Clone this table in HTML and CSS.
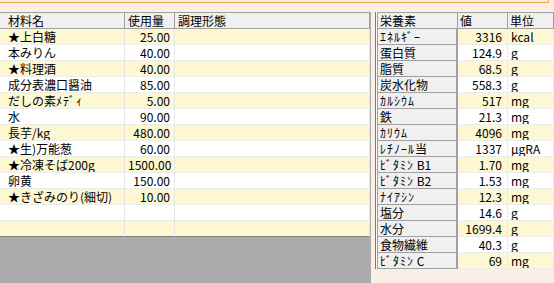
FILE: index.html
```html
<!DOCTYPE html>
<html lang="ja">
<head>
<meta charset="utf-8">
<link rel="stylesheet" href="styles.css">
</head>
<body>
<div class="topbar"></div>
<div class="main">
  <div class="left">
    <div class="grid ingredients">
      <div class="hc"></div><div class="hc">材料名</div><div class="hc">使用量</div><div class="hc">調理形態</div>
      <div class="c y"></div><div class="c y">★上白糖</div><div class="c y num">25.00</div><div class="c y"></div>
      <div class="c"></div><div class="c">本みりん</div><div class="c num">40.00</div><div class="c"></div>
      <div class="c y"></div><div class="c y">★料理酒</div><div class="c y num">40.00</div><div class="c y"></div>
      <div class="c"></div><div class="c">成分表濃口醤油</div><div class="c num">85.00</div><div class="c"></div>
      <div class="c y"></div><div class="c y">だしの素<span class="hk">ﾒﾃﾞｨ</span></div><div class="c y num">5.00</div><div class="c y"></div>
      <div class="c"></div><div class="c">水</div><div class="c num">90.00</div><div class="c"></div>
      <div class="c y"></div><div class="c y">長芋/kg</div><div class="c y num">480.00</div><div class="c y"></div>
      <div class="c"></div><div class="c">★生)万能葱</div><div class="c num">60.00</div><div class="c"></div>
      <div class="c y"></div><div class="c y">★冷凍そば200g</div><div class="c y num">1500.00</div><div class="c y"></div>
      <div class="c"></div><div class="c">卵黄</div><div class="c num">150.00</div><div class="c"></div>
      <div class="c y"></div><div class="c y">★きざみのり(細切)</div><div class="c y num">10.00</div><div class="c y"></div>
      <div class="c"></div><div class="c"></div><div class="c"></div><div class="c"></div>
      <div class="c y last"></div><div class="c y last"></div><div class="c y last"></div><div class="c y last"></div>
    </div>
  </div>
  <div class="right">
    <div class="grid nutrients">
      <div class="hc">栄養素</div><div class="hc">値</div><div class="hc">単位</div>
      <div class="lc hk">ｴﾈﾙｷﾞｰ</div><div class="c y num">3316</div><div class="c y">kcal</div>
      <div class="lc">蛋白質</div><div class="c num">124.9</div><div class="c">g</div>
      <div class="lc">脂質</div><div class="c y num">68.5</div><div class="c y">g</div>
      <div class="lc">炭水化物</div><div class="c num">558.3</div><div class="c">g</div>
      <div class="lc hk">ｶﾙｼｳﾑ</div><div class="c y num">517</div><div class="c y">mg</div>
      <div class="lc">鉄</div><div class="c num">21.3</div><div class="c">mg</div>
      <div class="lc hk">ｶﾘｳﾑ</div><div class="c y num">4096</div><div class="c y">mg</div>
      <div class="lc"><span class="hk">ﾚﾁﾉｰﾙ</span>当</div><div class="c num">1337</div><div class="c">μgRA</div>
      <div class="lc"><span class="hk">ﾋﾞﾀﾐﾝ</span> B1</div><div class="c y num">1.70</div><div class="c y">mg</div>
      <div class="lc"><span class="hk">ﾋﾞﾀﾐﾝ</span> B2</div><div class="c num">1.53</div><div class="c">mg</div>
      <div class="lc hk">ﾅｲｱｼﾝ</div><div class="c y num">12.3</div><div class="c y">mg</div>
      <div class="lc">塩分</div><div class="c num">14.6</div><div class="c">g</div>
      <div class="lc">水分</div><div class="c y num">1699.4</div><div class="c y">g</div>
      <div class="lc">食物繊維</div><div class="c num">40.3</div><div class="c">g</div>
      <div class="lc"><span class="hk">ﾋﾞﾀﾐﾝ</span> C</div><div class="c y num">69</div><div class="c y">mg</div>
    </div>
  </div>
</div>
</body>
</html>
```

FILE: styles.css
```css
html, body {
  margin: 0;
  padding: 0;
}
body {
  width: 554px;
  height: 283px;
  overflow: hidden;
  background: #faeee5;
  font-family: "Noto Sans CJK JP", "Liberation Sans", sans-serif;
  font-size: 12px;
  color: #000;
}
.topbar {
  width: 548px;
  height: 2px;
  border-bottom: 1px solid #f5a447;
  border-right: 1px solid #f5a447;
}
.main {
  display: flex;
  margin-top: 9px;
  height: 271px;
}
.left {
  width: 371px;
  background: #ababab;
}
.grid {
  display: grid;
}
.ingredients {
  grid-template-columns: 5px 120px 50px 195px;
  border-top: 1px solid #a0a0a0;
  width: 370px;
}
.hc, .c, .lc {
  box-sizing: border-box;
  height: 16px;
  line-height: 15px;
  padding: 0 3px;
  white-space: nowrap;
  overflow: hidden;
}
.hc {
  background: #f0f0f0;
  border-right: 1px solid #a0a0a0;
  border-bottom: 1px solid #a0a0a0;
}
.c {
  background: #fff;
  border-right: 1px solid #e6e6e6;
  border-bottom: 1px solid #ececec;
}
.c.y {
  background: #fef8d2;
}
.c.last {
  border-bottom: 1px solid #7d7d7d;
}
.num {
  text-align: right;
  padding-right: 4px;
}
.hk {
  letter-spacing: 1px;
}
.right {
  margin-left: 4px;
  align-self: flex-start;
  border-left: 1px solid #7a7a7a;
  padding-left: 1px;
  background: #fff;
}
.nutrients {
  grid-template-columns: 80px 50px 46px;
  border-top: 1px solid #a0a0a0;
  border-left: 1px solid #a0a0a0;
}
.nutrients .hc {
  padding-left: 2px;
}
.lc {
  background: #f0f0f0;
  border-right: 2px solid #a0a0a0;
  border-bottom: 1px solid #a0a0a0;
  padding-left: 2px;
}
.nutrients .num {
  padding-right: 5px;
}
.nutrients .c {
  border-right: 1px solid #ededed;
}
```
